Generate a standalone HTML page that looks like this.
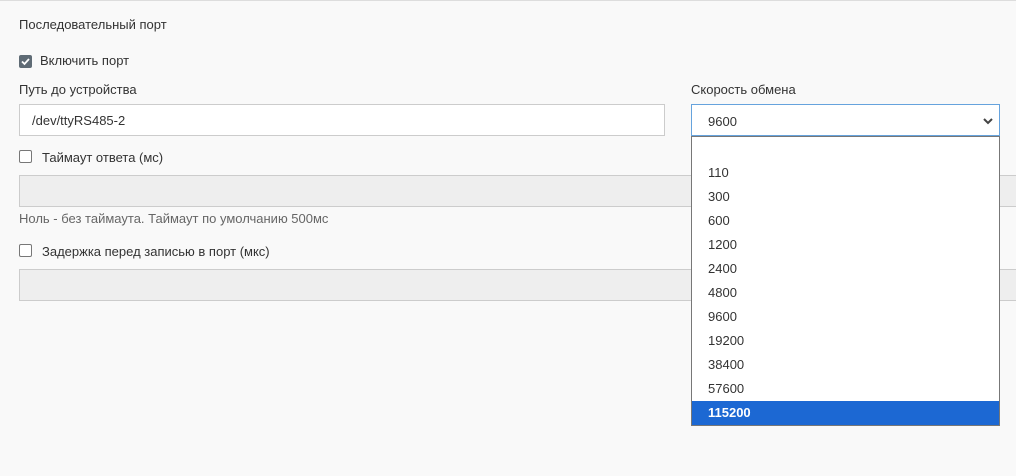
<!DOCTYPE html><html><head><style>
body{margin:0;width:1016px;height:476px;background:#f9f9f9;font-family:"Liberation Sans",sans-serif;font-size:13px;color:#333;position:relative;overflow:hidden}
.a{position:absolute;white-space:nowrap}
.inp{position:absolute;background:#fff;border:1px solid #ccc;box-sizing:border-box}
.dis{position:absolute;background:#eee;border:1px solid #ccc;box-sizing:border-box}
.cb{position:absolute;width:11px;height:11px;border:1px solid #777;border-radius:2px;background:#fff}
.dd{position:absolute;left:691px;top:136px;width:309px;height:290px;background:#fff;border:1px solid #777;box-sizing:border-box}
.dd div{height:24px;line-height:24px;padding-left:16px;color:#333}
</style></head><body>
<div class="a" style="left:0;top:0;width:1016px;height:1px;background:#ddd"></div>
<div class="a" style="left:19px;top:17px">Последовательный порт</div>
<div class="a" style="left:19px;top:55px;width:13px;height:13px;background:#5f6b75;border-radius:2px"><svg width="13" height="13"><path d="M3 6.5l2.5 2.5 4.5-5" stroke="#fff" stroke-width="1.8" fill="none"/></svg></div>
<div class="a" style="left:40px;top:53px">Включить порт</div>
<div class="a" style="left:19px;top:82px">Путь до устройства</div>
<div class="inp" style="left:19px;top:104px;width:646px;height:32px"><span class="a" style="left:12px;top:8px">/dev/ttyRS485-2</span></div>
<div class="a" style="left:691px;top:82px">Скорость обмена</div>
<div class="inp" style="left:691px;top:104px;width:309px;height:32px;border-color:#66a3dd"><span class="a" style="left:16px;top:9px">9600</span><svg class="a" style="left:291px;top:11px" width="10" height="10"><path d="M1 3l4 4 4-4" stroke="#444" stroke-width="2" fill="none"/></svg></div>
<div class="cb" style="left:19px;top:150px"></div>
<div class="a" style="left:42px;top:150px">Таймаут ответа (мс)</div>
<div class="dis" style="left:19px;top:175px;width:1000px;height:32px"></div>
<div class="a" style="left:19px;top:211px;color:#666">Ноль - без таймаута. Таймаут по умолчанию 500мс</div>
<div class="cb" style="left:19px;top:244px"></div>
<div class="a" style="left:42px;top:244px">Задержка перед записью в порт (мкс)</div>
<div class="dis" style="left:19px;top:269px;width:1000px;height:32px"></div>
<div class="dd"><div style="height:24px"></div><div>110</div><div>300</div><div>600</div><div>1200</div><div>2400</div><div>4800</div><div>9600</div><div>19200</div><div>38400</div><div>57600</div><div style="background:#1c68d3;color:#fff;font-weight:bold">115200</div></div>
</body></html>
